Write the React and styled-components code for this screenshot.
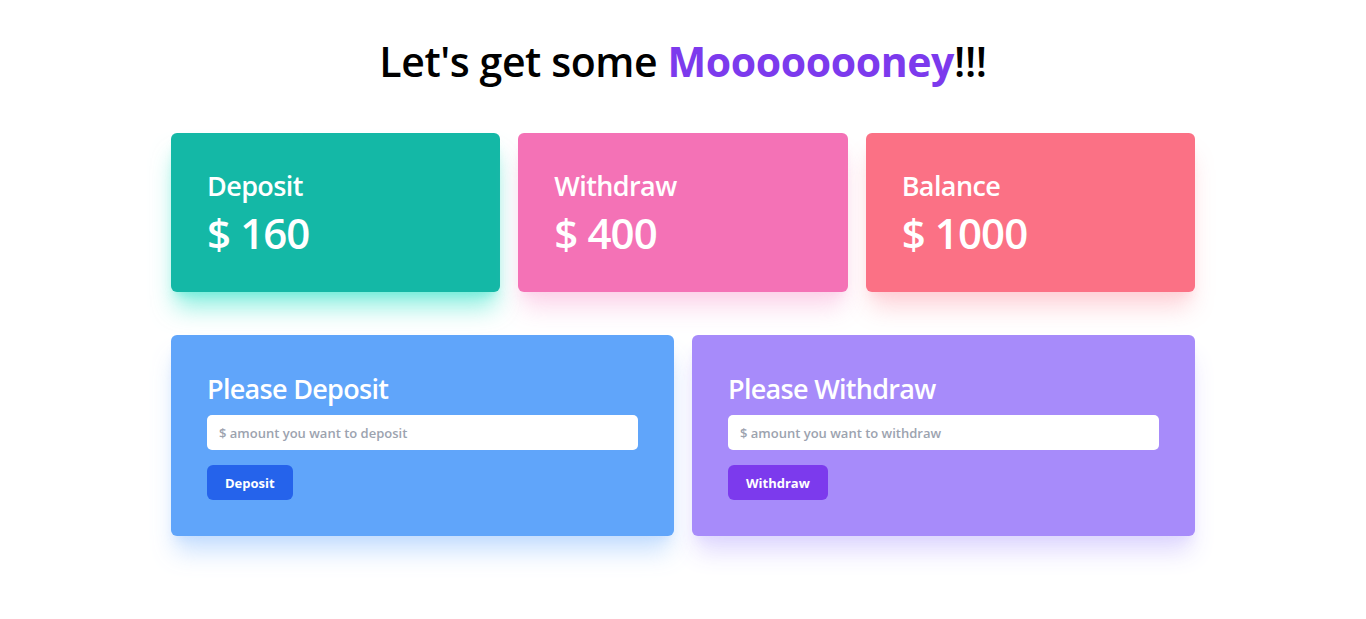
import React from 'react'
import styled, { createGlobalStyle } from 'styled-components'

const GlobalStyle = createGlobalStyle`
  body {
    margin: 0;
    background: #fff;
    font-family: "Open Sans", "Noto Sans", sans-serif;
  }
`

const Page = styled.div`
  max-width: 1024px;
  margin: 0 auto;
  padding: 33px 0 80px;
`

const Heading = styled.h1`
  margin: 0;
  text-align: center;
  font-size: 41px;
  line-height: 56px;
  font-weight: 600;
  color: #000;
  letter-spacing: -0.4px;
  span {
    color: #7c3aed;
    font-weight: 700;
  }
`

const StatGrid = styled.div`
  display: grid;
  grid-template-columns: repeat(3, 1fr);
  gap: 18px;
  margin-top: 44px;
`

const StatCard = styled.div`
  background: ${p => p.$bg};
  border-radius: 6px;
  padding: 34px 36px 31px;
  color: #fff;
  box-shadow: 0 20px 25px -5px ${p => p.$glow}, 0 8px 10px -6px ${p => p.$glow};
`

const StatLabel = styled.div`
  font-size: 27px;
  font-weight: 600;
  line-height: 38px;
  letter-spacing: -0.6px;
`

const StatAmount = styled.div`
  font-size: 42px;
  font-weight: 600;
  line-height: 56px;
  letter-spacing: -0.9px;
`

const ActionGrid = styled.div`
  display: grid;
  grid-template-columns: repeat(2, 1fr);
  gap: 18px;
  margin-top: 43px;
`

const ActionCard = styled.div`
  background: ${p => p.$bg};
  border-radius: 6px;
  padding: 36px;
  box-shadow: 0 20px 25px -5px ${p => p.$glow}, 0 8px 10px -6px ${p => p.$glow};
`

const ActionTitle = styled.h2`
  margin: -1px 0 7px;
  font-size: 27px;
  font-weight: 600;
  line-height: 38px;
  color: #fff;
  letter-spacing: -0.7px;
`

const AmountInput = styled.input`
  display: block;
  width: 100%;
  box-sizing: border-box;
  height: 35px;
  border: none;
  border-radius: 5px;
  padding: 0 12px;
  font-family: inherit;
  font-size: 13px;
  font-weight: 600;
  color: #374151;
  outline: none;
  &::placeholder {
    color: #9ca3af;
  }
`

const ActionButton = styled.button`
  margin-top: 15px;
  height: 35px;
  padding: 0 18px;
  border: none;
  border-radius: 6px;
  background: ${p => p.$bg};
  color: #fff;
  font-family: inherit;
  font-size: 13px;
  font-weight: 700;
  cursor: pointer;
`

const stats = [
  { label: 'Deposit', amount: 160, bg: '#14b8a6', glow: 'rgba(94, 234, 212, 0.7)' },
  { label: 'Withdraw', amount: 400, bg: '#f472b6', glow: 'rgba(251, 207, 232, 0.85)' },
  { label: 'Balance', amount: 1000, bg: '#fb7185', glow: 'rgba(254, 205, 211, 0.85)' },
]

const actions = [
  { title: 'Please Deposit', placeholder: '$ amount you want to deposit', button: 'Deposit', bg: '#60a5fa', btn: '#2563eb', glow: 'rgba(191, 219, 254, 0.85)' },
  { title: 'Please Withdraw', placeholder: '$ amount you want to withdraw', button: 'Withdraw', bg: '#a78bfa', btn: '#7c3aed', glow: 'rgba(221, 214, 254, 0.95)' },
]

export default function App() {
  return (
    <>
      <GlobalStyle />
      <Page>
        <Heading>
          Let's get some <span>Moooooooney</span>!!!
        </Heading>
        <StatGrid>
          {stats.map(s => (
            <StatCard key={s.label} $bg={s.bg} $glow={s.glow}>
              <StatLabel>{s.label}</StatLabel>
              <StatAmount>$ {s.amount}</StatAmount>
            </StatCard>
          ))}
        </StatGrid>
        <ActionGrid>
          {actions.map(a => (
            <ActionCard key={a.title} $bg={a.bg} $glow={a.glow}>
              <ActionTitle>{a.title}</ActionTitle>
              <AmountInput type="text" placeholder={a.placeholder} />
              <ActionButton $bg={a.btn}>{a.button}</ActionButton>
            </ActionCard>
          ))}
        </ActionGrid>
      </Page>
    </>
  )
}
